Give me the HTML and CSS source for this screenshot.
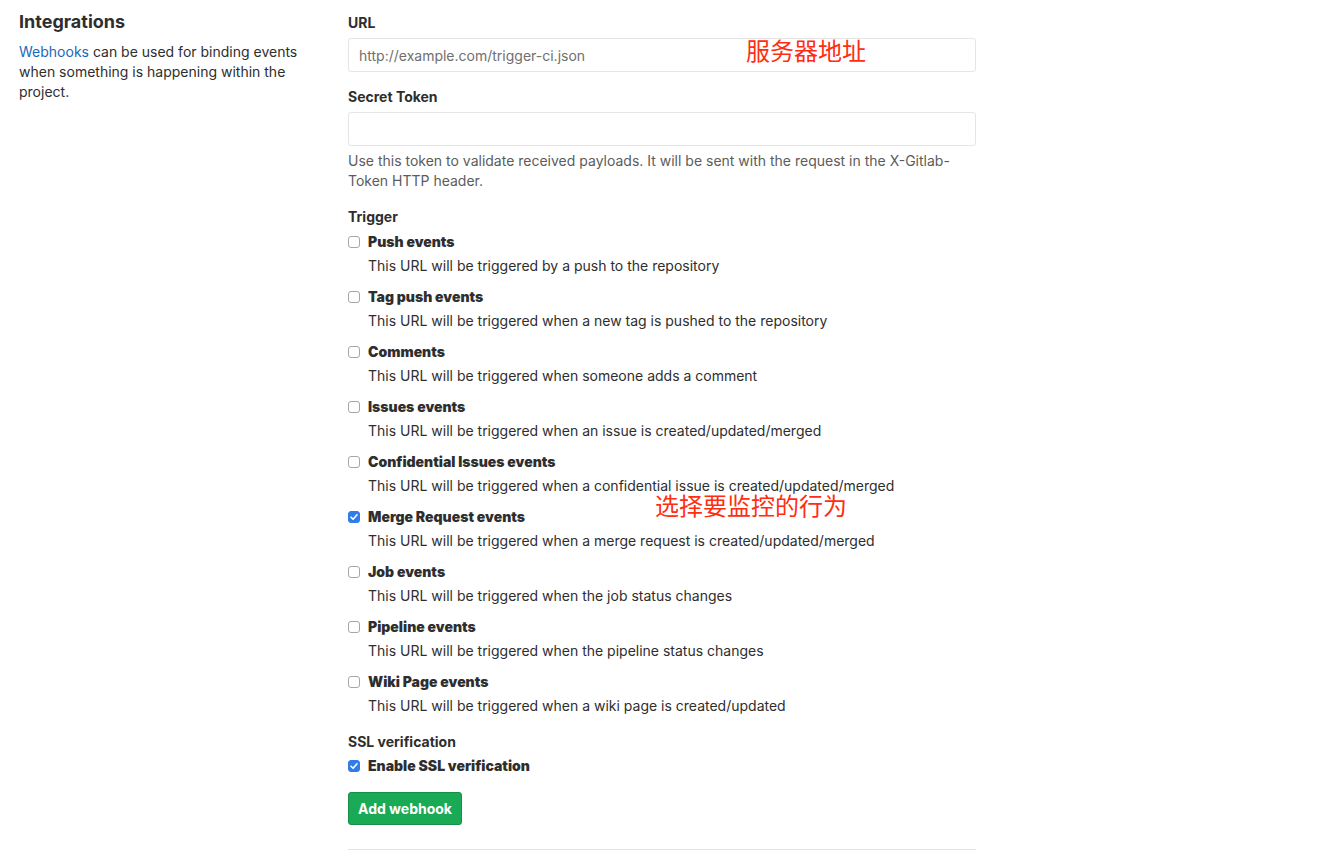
FILE: index.html
```html
<!DOCTYPE html>
<html lang="en">
<head>
<meta charset="utf-8">
<title>Integrations</title>
<link rel="stylesheet" href="styles.css">
</head>
<body>
<div class="page">
  <aside class="intro">
    <h4 class="intro-title">Integrations</h4>
    <p class="intro-text"><a href="#" class="link">Webhooks</a> can be used for binding events when something is happening within the project.</p>
  </aside>
  <form class="hook-form">
    <div class="form-group">
      <label class="label">URL</label>
      <input class="input" type="text" placeholder="http://example.com/trigger-ci.json">
    </div>
    <div class="form-group">
      <label class="label">Secret Token</label>
      <input class="input" type="text">
      <p class="help">Use this token to validate received payloads. It will be sent with the request in the X-Gitlab-Token HTTP header.</p>
    </div>
    <div class="form-group">
      <div class="label">Trigger</div>
      <ul class="triggers">
        <li class="trigger">
          <label class="check"><span class="box"></span><strong>Push events</strong></label>
          <p class="trigger-desc">This URL will be triggered by a push to the repository</p>
        </li>
        <li class="trigger">
          <label class="check"><span class="box"></span><strong>Tag push events</strong></label>
          <p class="trigger-desc">This URL will be triggered when a new tag is pushed to the repository</p>
        </li>
        <li class="trigger">
          <label class="check"><span class="box"></span><strong>Comments</strong></label>
          <p class="trigger-desc">This URL will be triggered when someone adds a comment</p>
        </li>
        <li class="trigger">
          <label class="check"><span class="box"></span><strong>Issues events</strong></label>
          <p class="trigger-desc">This URL will be triggered when an issue is created/updated/merged</p>
        </li>
        <li class="trigger">
          <label class="check"><span class="box"></span><strong>Confidential Issues events</strong></label>
          <p class="trigger-desc">This URL will be triggered when a confidential issue is created/updated/merged</p>
        </li>
        <li class="trigger">
          <label class="check"><span class="box checked"><svg viewBox="0 0 12 12" width="12" height="12"><path d="M3 6.2 L5.1 8.3 L9 3.8" fill="none" stroke="#fff" stroke-width="1.6" stroke-linecap="round" stroke-linejoin="round"/></svg></span><strong>Merge Request events</strong></label>
          <p class="trigger-desc">This URL will be triggered when a merge request is created/updated/merged</p>
        </li>
        <li class="trigger">
          <label class="check"><span class="box"></span><strong>Job events</strong></label>
          <p class="trigger-desc">This URL will be triggered when the job status changes</p>
        </li>
        <li class="trigger">
          <label class="check"><span class="box"></span><strong>Pipeline events</strong></label>
          <p class="trigger-desc">This URL will be triggered when the pipeline status changes</p>
        </li>
        <li class="trigger">
          <label class="check"><span class="box"></span><strong>Wiki Page events</strong></label>
          <p class="trigger-desc">This URL will be triggered when a wiki page is created/updated</p>
        </li>
      </ul>
    </div>
    <div class="form-group ssl">
      <div class="label">SSL verification</div>
      <label class="check"><span class="box checked"><svg viewBox="0 0 12 12" width="12" height="12"><path d="M3 6.2 L5.1 8.3 L9 3.8" fill="none" stroke="#fff" stroke-width="1.6" stroke-linecap="round" stroke-linejoin="round"/></svg></span><strong>Enable SSL verification</strong></label>
    </div>
    <button type="button" class="btn-create">Add webhook</button>
    <hr class="divider">
    <span class="note note-url">服务器地址</span>
    <span class="note note-trigger">选择要监控的行为</span>
  </form>
</div>
</body>
</html>
```

FILE: styles.css
```css
* { box-sizing: border-box; }
html, body { margin: 0; padding: 0; background: #fff; }
body {
  font-family: Inter, "Liberation Sans", Arial, sans-serif;
  font-size: 14px;
  line-height: 20px;
  color: #2e2e2e;
}
.page {
  display: flex;
  align-items: flex-start;
  padding: 13px 0 0 19px;
}
.intro {
  width: 329px;
  flex: none;
}
.intro-title {
  margin: -1px 0 10px;
  font-size: 18px;
  line-height: 20px;
  font-weight: 700;
  color: #2e2e2e;
}
.intro-text {
  margin: 0;
  width: 290px;
}
.link { color: #1b69b6; text-decoration: none; }
.hook-form {
  position: relative;
  width: 628px;
  flex: none;
}
.form-group { margin-bottom: 15px; }
.label {
  display: block;
  font-weight: 700;
  margin-bottom: 5px;
}
.input {
  display: block;
  width: 100%;
  height: 34px;
  padding: 6px 10px;
  border: 1px solid #e5e5e5;
  border-radius: 3px;
  font-family: inherit;
  font-size: 14px;
  color: #555;
  background: #fff;
}
.input::placeholder { color: #6f6f6f; }
.help {
  margin: 5px 0 0;
  padding-bottom: 1px;
  color: #5c5c5c;
}
.triggers {
  list-style: none;
  margin: 0;
  padding: 0;
}
.trigger { margin-bottom: 11px; }
.check {
  display: flex;
  align-items: center;
  font-weight: 700;
}
.box {
  width: 12px;
  height: 12px;
  border: 1px solid #a6a6a6;
  border-radius: 3px;
  margin-right: 8px;
  flex: none;
  display: flex;
  background: #fff;
}
.box.checked {
  background: #2f7de9;
  border-color: #2f7de9;
}
.box svg { display: block; margin: -1px; }
.trigger-desc {
  margin: 4px 0 0 20px;
}
.ssl { margin-top: 16px; margin-bottom: 16px; }
.ssl .label { margin-bottom: 4px; }
.btn-create {
  display: block;
  height: 33px;
  padding: 0 9px;
  background: #1aaa55;
  border: 1px solid #168f48;
  border-radius: 3px;
  color: #fff;
  font-family: inherit;
  font-size: 14px;
  font-weight: 700;
}
.divider {
  margin: 24px 0 0;
  border: 0;
  border-top: 1px solid #e5e5e5;
}
.note {
  position: absolute;
  font-family: "Noto Sans CJK SC", sans-serif;
  font-size: 24px;
  line-height: 28px;
  color: #ff2d12;
  white-space: nowrap;
}
.note-url { left: 398px; top: 23px; }
.note-trigger { left: 307px; top: 478px; }
```
